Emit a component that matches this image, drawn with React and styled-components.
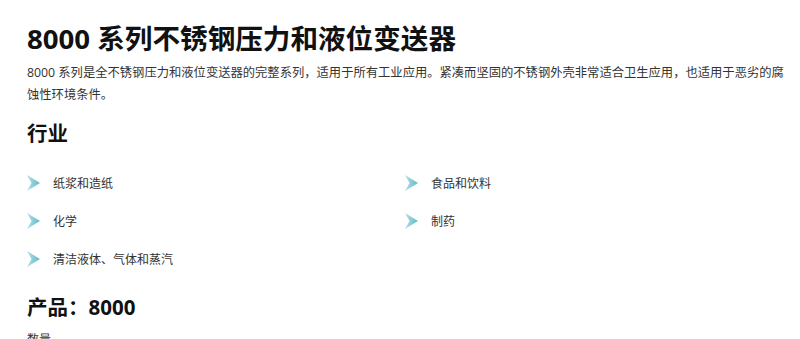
import React from 'react'
import styled, { createGlobalStyle } from 'styled-components'

const GlobalStyle = createGlobalStyle`
    body {
        margin: 0;
        background: #ffffff;
        font-family: "Open Sans", "Noto Sans CJK SC", sans-serif;
    }
`

const industries = [
    '纸浆和造纸',
    '食品和饮料',
    '化学',
    '制药',
    '清洁液体、气体和蒸汽',
]

const Chevron = () => (
    <ChevronSvg viewBox="0 0 13 16" width="13" height="16">
        <defs>
            <linearGradient id="chev" x1="0" y1="0" x2="1" y2="0">
                <stop offset="0" stopColor="#b2e0e8" />
                <stop offset="1" stopColor="#5fb9c8" />
            </linearGradient>
        </defs>
        <polygon points="0,0 13,8 0,16 4.5,8" fill="url(#chev)" />
    </ChevronSvg>
)

const App = () => {
    return (
        <>
            <GlobalStyle />
            <Pagina>
                <Titulo>8000 系列不锈钢压力和液位变送器</Titulo>
                <Descricao>
                    8000 系列是全不锈钢压力和液位变送器的完整系列，适用于所有工业应用。紧凑而坚固的不锈钢外壳非常适合卫生应用，也适用于恶劣的腐蚀性环境条件。
                </Descricao>
                <Secao>行业</Secao>
                <Lista>
                    {industries.map((item) => (
                        <Item key={item}>
                            <Chevron />
                            <span>{item}</span>
                        </Item>
                    ))}
                </Lista>
                <Secao $top={14}>产品：8000</Secao>
                <Rodape>数量</Rodape>
            </Pagina>
        </>
    )
}

const Pagina = styled.div`
    padding: 0 8px 0 27px;
    color: #333333;
`

const Titulo = styled.h1`
    margin: 18px 0 0 0;
    font-size: 27.6px;
    line-height: 40px;
    font-weight: 700;
    color: #111111;
`

const Descricao = styled.p`
    margin: 4px 0 0 0;
    font-size: 12.3px;
    line-height: 21.6px;
    color: #333333;
`

const Secao = styled.h2`
    margin: ${(p) => p.$top || 13}px 0 0 0;
    font-size: 20.5px;
    line-height: 30px;
    font-weight: 700;
    color: #111111;
`

const Lista = styled.ul`
    list-style: none;
    margin: 16px 0 0 0;
    padding: 0;
    display: grid;
    grid-template-columns: 378px 1fr;
`

const Item = styled.li`
    display: flex;
    align-items: center;
    gap: 13px;
    height: 38px;
    font-size: 12px;
    color: #333333;
`

const ChevronSvg = styled.svg`
    flex: none;
    margin-bottom: 1px;
`

const Rodape = styled.div`
    margin-top: 8px;
    font-size: 12px;
    line-height: 20px;
    color: #333333;
`

export default App
